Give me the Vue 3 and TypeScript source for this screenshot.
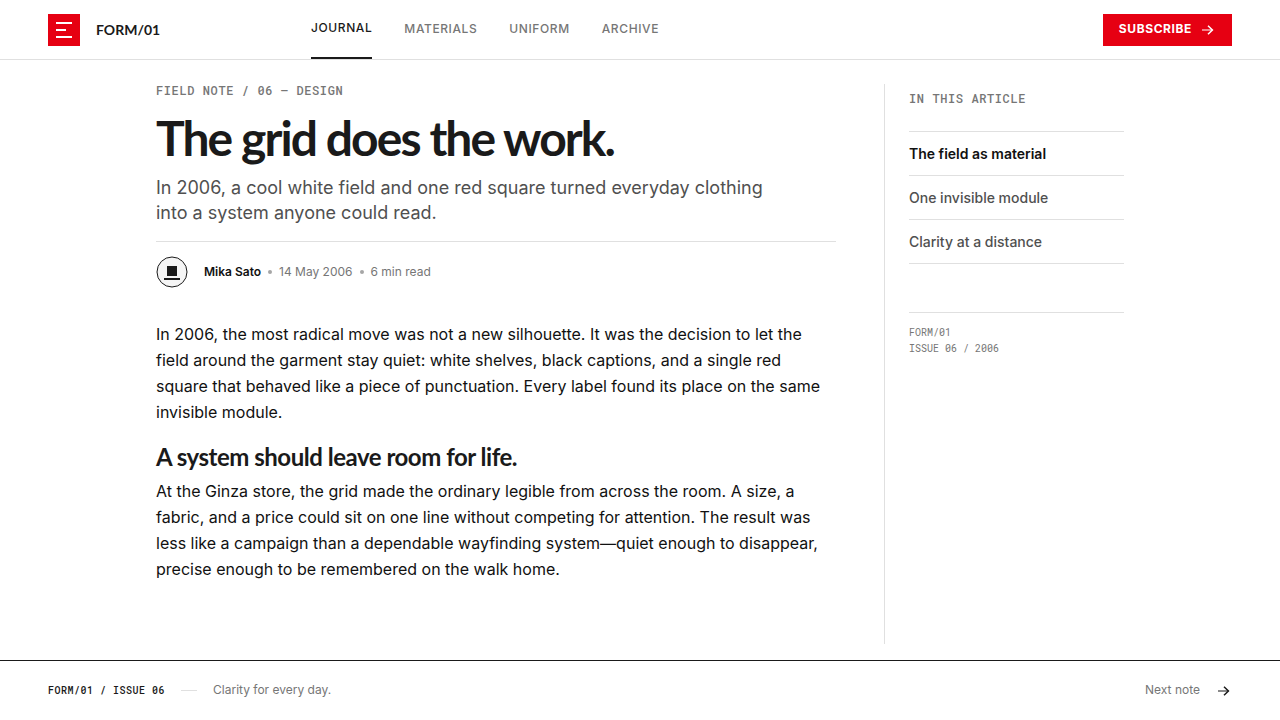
<script setup lang="ts">
interface LinkItem {
  label: string
  href: string
  active?: boolean
}

const sections: LinkItem[] = [
  { label: 'Journal', href: '#journal', active: true },
  { label: 'Materials', href: '#materials' },
  { label: 'Uniform', href: '#uniform' },
  { label: 'Archive', href: '#archive' },
]

const contents: LinkItem[] = [
  { label: 'The field as material', href: '#field', active: true },
  { label: 'One invisible module', href: '#module' },
  { label: 'Clarity at a distance', href: '#clarity' },
]
</script>

<template>
  <div class="page">
    <header class="header">
      <a class="brand" href="#home">
        <svg class="logo" viewBox="0 0 32 32" aria-hidden="true">
          <path fill="#e60012" d="M0 0h32v32H0z" />
          <path fill="#fff" d="M8 8h16v2H8zM8 15h10v2H8zM8 22h16v2H8z" />
        </svg>
        <span>FORM/01</span>
      </a>
      <nav class="nav" aria-label="Sections">
        <a
          v-for="item in sections"
          :key="item.label"
          :href="item.href"
          :class="{ active: item.active }"
          :aria-current="item.active ? 'page' : undefined"
        >{{ item.label }}</a>
      </nav>
      <button class="subscribe" type="button">
        <span>Subscribe</span>
        <svg class="arrow" viewBox="0 0 16 16" aria-hidden="true">
          <path class="shaft" d="M2 8h10.5" />
          <path d="M8 3.8l4.4 4.2L8 12.2" />
        </svg>
      </button>
    </header>

    <main class="main">
      <article class="article">
        <p class="label">FIELD NOTE / 06 — DESIGN</p>
        <h1>The grid does the work.</h1>
        <p class="deck">
          In 2006, a cool white field and one red square turned everyday clothing into a system anyone could read.
        </p>
        <div class="byline">
          <svg class="avatar" viewBox="0 0 32 32" aria-hidden="true">
            <circle cx="16" cy="16" r="15" fill="#f5f5f5" stroke="#1a1a1a" />
            <path fill="#1a1a1a" d="M11 10h10v10H11zM8 22h16v2H8z" />
          </svg>
          <strong>Mika Sato</strong>
          <i class="dot"></i>
          <time datetime="2006-05-14">14 May 2006</time>
          <i class="dot"></i>
          <span>6 min read</span>
        </div>
        <p class="copy">
          In 2006, the most radical move was not a new silhouette. It was the decision to let the field around the
          garment stay quiet: white shelves, black captions, and a single red square that behaved like a piece of
          punctuation. Every label found its place on the same invisible module.
        </p>
        <h2>A system should leave room for life.</h2>
        <p class="copy">
          At the Ginza store, the grid made the ordinary legible from across the room. A size, a fabric, and a price
          could sit on one line without competing for attention. The result was less like a campaign than a dependable
          wayfinding system—quiet enough to disappear, precise enough to be remembered on the walk home.
        </p>
      </article>

      <aside class="aside">
        <p class="label">IN THIS ARTICLE</p>
        <ul class="toc">
          <li v-for="item in contents" :key="item.label">
            <a :href="item.href" :class="{ active: item.active }">{{ item.label }}</a>
          </li>
        </ul>
        <p class="issue">FORM/01<br />ISSUE 06 / 2006</p>
      </aside>
    </main>

    <footer class="footer">
      <span class="edition">FORM/01 / ISSUE 06</span>
      <i class="dash"></i>
      <span class="motto">Clarity for every day.</span>
      <a class="next" href="#next">
        <span>Next note</span>
        <svg class="arrow" viewBox="0 0 16 16" aria-hidden="true">
          <path class="shaft" d="M2 8h10.5" />
          <path d="M8 3.8l4.4 4.2L8 12.2" />
        </svg>
      </a>
    </footer>
  </div>
</template>

<style>
body {
  margin: 0;
  background: #fff;
}
</style>

<style scoped>
.page {
  display: flex;
  flex-direction: column;
  min-height: 100vh;
  color: #1a1a1a;
  font-family: Inter, 'Liberation Sans', sans-serif;
}

.page *,
.page {
  box-sizing: border-box;
}

p,
h1,
h2,
ul {
  margin: 0;
  padding: 0;
}

a {
  color: inherit;
  text-decoration: none;
}

.header {
  display: grid;
  grid-template-columns: 263px 1fr auto;
  align-items: center;
  height: 60px;
  padding: 0 48px;
  border-bottom: 1px solid #e0e0e0;
}

.brand {
  display: flex;
  align-items: center;
  gap: 16px;
  font-family: Lato, sans-serif;
  font-size: 14px;
  font-weight: 700;
}

.logo,
.avatar {
  display: block;
  width: 32px;
  height: 32px;
}

.nav {
  display: flex;
  align-self: stretch;
  gap: 32px;
  color: #767676;
  font-size: 12px;
  font-weight: 500;
  letter-spacing: 0.05em;
  text-transform: uppercase;
}

.nav a {
  display: flex;
  align-items: center;
  padding-bottom: 2px;
}

.nav .active {
  color: #1a1a1a;
  border-bottom: 2px solid #1a1a1a;
}

.subscribe {
  display: flex;
  align-items: center;
  gap: 8px;
  height: 32px;
  padding: 0 16px;
  border: 0;
  background: #e60012;
  color: #fff;
  font: 700 12px Inter, 'Liberation Sans', sans-serif;
  letter-spacing: 0.05em;
  text-transform: uppercase;
}

.subscribe span,
.motto,
.next span,
.byline strong,
.byline time,
.byline span {
  padding-bottom: 2px;
}

.arrow {
  width: 16px;
  height: 16px;
  fill: none;
  stroke: currentColor;
  stroke-width: 1.5;
}

.arrow .shaft {
  stroke-width: 1.2;
  opacity: 0.85;
}

.main {
  display: grid;
  flex: 1;
  grid-template-columns: minmax(0, 1fr) 240px;
  gap: 48px;
  width: 100%;
  max-width: 1016px;
  margin: 0 auto;
  padding: 24px 24px 16px;
}

.label {
  color: #767676;
  font: 500 12px/12px 'Roboto Mono', 'DejaVu Sans Mono', monospace;
  letter-spacing: 0.05em;
}

h1,
h2 {
  font-family: Lato, sans-serif;
  font-weight: 700;
}

h1 {
  margin-top: 14px;
  font-size: 48px;
  line-height: 56px;
  letter-spacing: -0.04em;
}

.deck {
  max-width: 640px;
  margin-top: 9px;
  color: #505050;
  font-size: 18px;
  line-height: 25px;
}

.byline {
  display: flex;
  align-items: center;
  gap: 7px;
  margin-top: 16px;
  margin-bottom: 33px;
  padding-top: 14px;
  border-top: 1px solid #e0e0e0;
  color: #767676;
  font-size: 12px;
}

.byline strong {
  margin-left: 9px;
  color: #111;
  font-weight: 600;
}

.dot {
  width: 4px;
  height: 4px;
  border-radius: 50%;
  background: #a6a6a6;
}

.copy {
  color: #111;
  font-size: 16px;
  line-height: 26px;
}

h2 {
  margin: 16px 0 5px;
  font-size: 24px;
  line-height: 32px;
  letter-spacing: -0.02em;
}

.aside {
  padding: 8px 0 0 24px;
  border-left: 1px solid #e0e0e0;
}

.toc {
  margin-top: 27px;
  border-top: 1px solid #e0e0e0;
  list-style: none;
  color: #505050;
  font-size: 14px;
  font-weight: 500;
}

.toc a {
  display: block;
  padding: 12px 0 11px;
  border-bottom: 1px solid #e0e0e0;
  line-height: 20px;
}

.toc .active {
  color: #111;
  font-weight: 600;
}

.issue {
  margin-top: 48px;
  padding-top: 12px;
  border-top: 1px solid #e0e0e0;
  color: #767676;
  font: 400 10px/16px 'Roboto Mono', 'DejaVu Sans Mono', monospace;
}

.footer {
  display: flex;
  align-items: center;
  gap: 16px;
  height: 60px;
  padding: 0 48px;
  border-top: 1px solid #1a1a1a;
  color: #767676;
  font-size: 12px;
}

.edition {
  color: #1a1a1a;
  font: 500 10px 'Roboto Mono', 'DejaVu Sans Mono', monospace;
  letter-spacing: 0.05em;
}

.dash {
  width: 16px;
  height: 1px;
  background: #e0e0e0;
}

.next {
  display: flex;
  align-items: center;
  gap: 16px;
  margin-left: auto;
}

.next .arrow {
  color: #1a1a1a;
}
</style>
